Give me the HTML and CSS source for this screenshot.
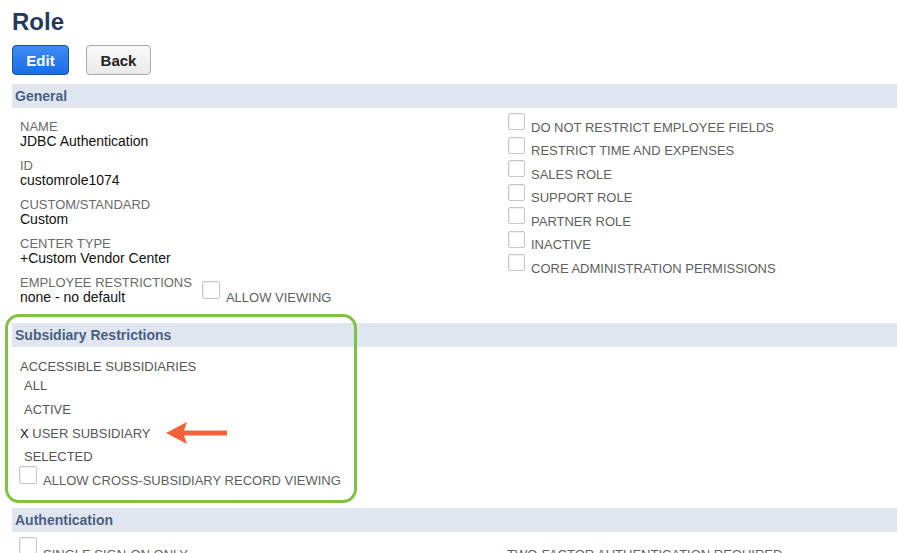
FILE: index.html
```html
<!DOCTYPE html>
<html lang="en">
<head>
<meta charset="utf-8">
<title>Role</title>
<link rel="stylesheet" href="styles.css">
</head>
<body>
<div class="page">
  <h1 class="title">Role</h1>
  <div class="actions">
    <button class="btn btn-primary">Edit</button>
    <button class="btn btn-secondary">Back</button>
  </div>

  <div class="section-bar">General</div>
  <div class="general">
    <div class="col-left">
      <div class="field">
        <div class="label">NAME</div>
        <div class="value">JDBC Authentication</div>
      </div>
      <div class="field">
        <div class="label">ID</div>
        <div class="value">customrole1074</div>
      </div>
      <div class="field">
        <div class="label">CUSTOM/STANDARD</div>
        <div class="value">Custom</div>
      </div>
      <div class="field">
        <div class="label">CENTER TYPE</div>
        <div class="value">+Custom Vendor Center</div>
      </div>
      <div class="field field-inline">
        <div>
          <div class="label">EMPLOYEE RESTRICTIONS</div>
          <div class="value">none - no default</div>
        </div>
        <div class="check-row check-inline">
          <span class="box"></span>
          <span class="check-text">ALLOW VIEWING</span>
        </div>
      </div>
    </div>
    <div class="col-right">
      <div class="check-row"><span class="box"></span><span class="check-text">DO NOT RESTRICT EMPLOYEE FIELDS</span></div>
      <div class="check-row"><span class="box"></span><span class="check-text">RESTRICT TIME AND EXPENSES</span></div>
      <div class="check-row"><span class="box"></span><span class="check-text">SALES ROLE</span></div>
      <div class="check-row"><span class="box"></span><span class="check-text">SUPPORT ROLE</span></div>
      <div class="check-row"><span class="box"></span><span class="check-text">PARTNER ROLE</span></div>
      <div class="check-row"><span class="box"></span><span class="check-text">INACTIVE</span></div>
      <div class="check-row"><span class="box"></span><span class="check-text">CORE ADMINISTRATION PERMISSIONS</span></div>
    </div>
  </div>

  <div class="section-bar">Subsidiary Restrictions</div>
  <div class="subsidiary">
    <div class="label label-dark">ACCESSIBLE SUBSIDIARIES</div>
    <div class="option">ALL</div>
    <div class="option">ACTIVE</div>
    <div class="option option-selected"><span class="mark">X</span> USER SUBSIDIARY<svg class="arrow" width="64" height="24" viewBox="0 0 64 24"><polygon points="0,11 21,0 18,8.5 61,8.5 61,13.5 18,13.5 21,22" fill="#f4623a"/></svg></div>
    <div class="option">SELECTED</div>
    <div class="check-row check-sub">
      <span class="box box-lg"></span>
      <span class="check-text">ALLOW CROSS-SUBSIDIARY RECORD VIEWING</span>
    </div>
  </div>

  <div class="section-bar">Authentication</div>
  <div class="auth">
    <div class="check-row check-auth">
      <span class="box box-lg"></span>
      <span class="check-text">SINGLE SIGN-ON ONLY</span>
    </div>
    <div class="auth-right">TWO-FACTOR AUTHENTICATION REQUIRED</div>
  </div>

  <div class="highlight"></div>
</div>
</body>
</html>
```

FILE: styles.css
```css
html, body {
  margin: 0;
  padding: 0;
  background: #ffffff;
  overflow: hidden;
}

body {
  font-family: "Liberation Sans", Arial, Helvetica, sans-serif;
  color: #222222;
}

.page {
  position: relative;
  padding: 7px 3px 0 12px;
  height: 553px;
  box-sizing: border-box;
}

.title {
  margin: 0;
  font-size: 24px;
  line-height: 30px;
  font-weight: bold;
  color: #27395a;
}

.actions {
  display: flex;
  gap: 17px;
  margin-top: 8px;
}

.btn {
  box-sizing: border-box;
  height: 30px;
  padding: 0;
  font-family: "Liberation Sans", Arial, sans-serif;
  font-size: 15px;
  font-weight: bold;
  border-radius: 4px;
}

.btn-primary {
  width: 57px;
  color: #ffffff;
  background: linear-gradient(#3f8cf2, #1a6be8);
  border: 1px solid #1b4fae;
}

.btn-secondary {
  width: 65px;
  color: #222222;
  background: linear-gradient(#fafafa, #e9e9e9);
  border: 1px solid #a9a9a9;
}

.section-bar {
  height: 24px;
  line-height: 24px;
  padding-left: 3px;
  background: #e0e6ef;
  font-size: 14px;
  font-weight: bold;
  color: #4a5f82;
}

.actions + .section-bar {
  margin-top: 9px;
}

.general {
  display: grid;
  grid-template-columns: 496px 1fr;
  height: 215px;
}

.col-left {
  padding: 12px 0 0 8px;
}

.col-right {
  padding-top: 5px;
}

.field {
  margin-bottom: 10px;
}

.field-inline {
  display: flex;
  align-items: flex-end;
  gap: 10px;
}

.label {
  font-size: 13px;
  line-height: 14px;
  color: #6a6a6a;
}

.label-dark {
  color: #555555;
  line-height: 15px;
}

.value {
  font-size: 14px;
  line-height: 15px;
  color: #111111;
}

.check-row {
  display: flex;
  height: 23.5px;
}

.box {
  box-sizing: border-box;
  flex: none;
  width: 17px;
  height: 17px;
  border: 1px solid #c6c6c6;
  border-radius: 2px;
  background: #ffffff;
  box-shadow: inset 1px 1px 1px rgba(0, 0, 0, 0.06);
}

.box-lg {
  width: 18px;
  height: 18px;
}

.check-text {
  padding-left: 6px;
  padding-top: 6.5px;
  font-size: 13px;
  line-height: 15px;
  color: #5e5e5e;
  white-space: nowrap;
}

.check-inline {
  height: auto;
  margin-bottom: 0;
}

.check-inline .box {
  width: 18px;
  height: 18px;
}

.check-inline .check-text {
  padding-top: 9px;
  line-height: 15px;
}

.subsidiary {
  padding: 12px 0 0 8px;
  height: 161px;
  box-sizing: border-box;
}

.option {
  position: relative;
  font-size: 13px;
  line-height: 24px;
  padding-left: 4px;
  color: #555555;
  height: 23.8px;
}

.option-selected {
  padding-left: 0;
}

.mark {
  color: #111111;
}

.arrow {
  position: absolute;
  left: 146px;
  top: 0;
}

.check-sub {
  margin-top: -3px;
  margin-left: -1px;
}

.auth {
  display: grid;
  grid-template-columns: 488px 1fr;
  padding: 5px 0 0 7px;
}

.check-auth .check-text {
  padding-top: 10px;
}

.auth-right {
  padding-top: 10px;
  font-size: 13px;
  line-height: 15px;
  color: #5e5e5e;
}

.highlight {
  position: absolute;
  left: 5px;
  top: 314px;
  width: 352px;
  height: 189px;
  box-sizing: border-box;
  border: 3px solid #80c242;
  border-radius: 14px;
  pointer-events: none;
}
```
